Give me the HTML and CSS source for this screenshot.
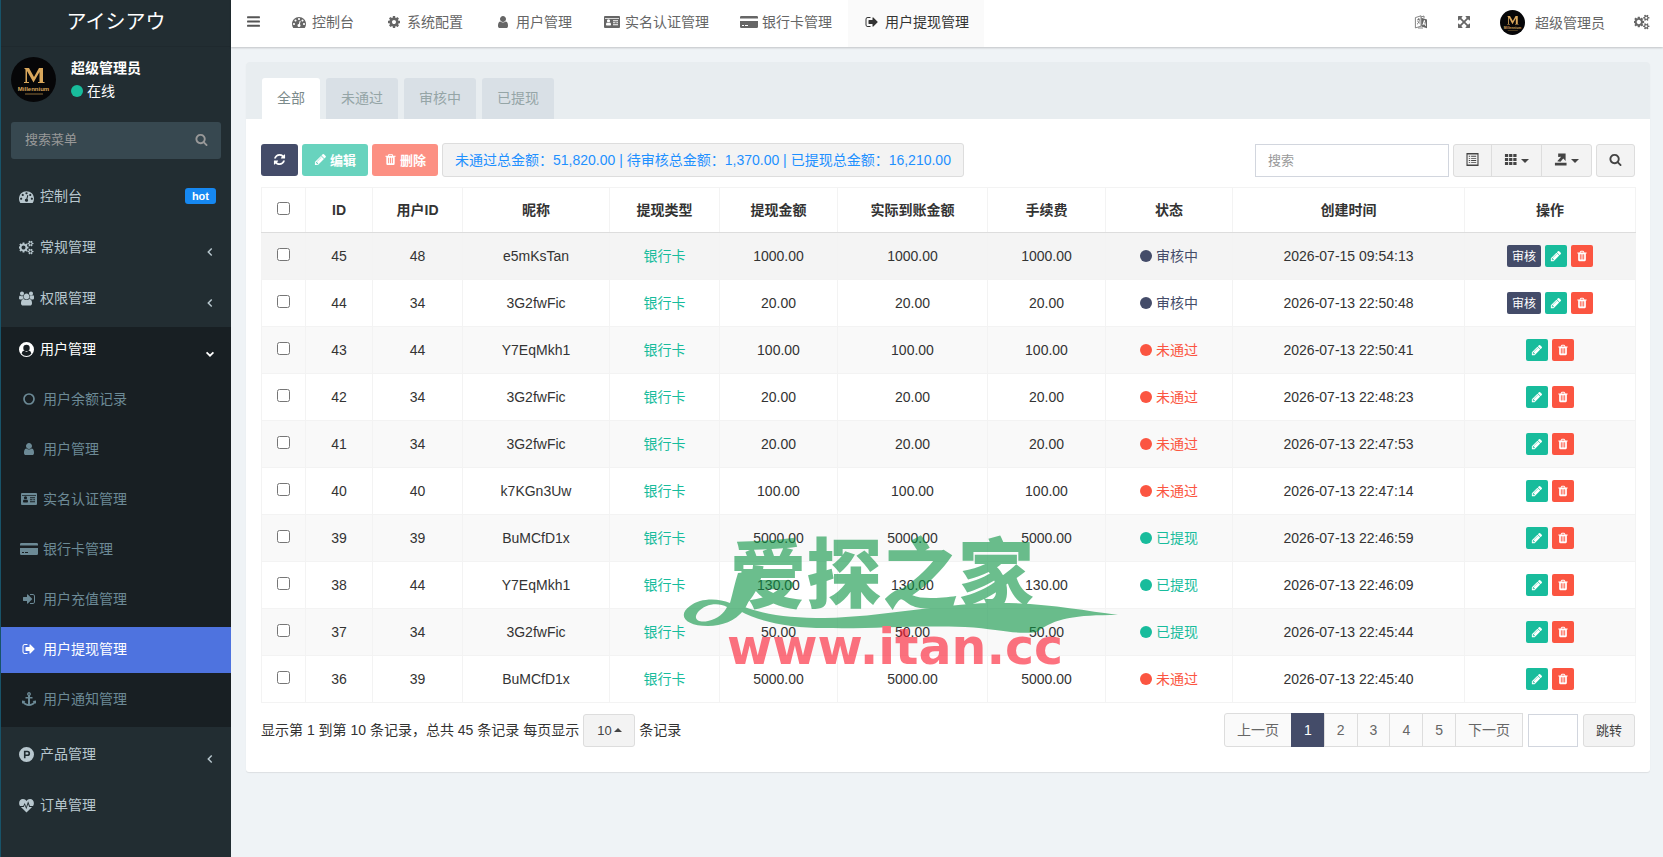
FILE: index.html
```
<!DOCTYPE html>
<html lang="zh-CN">
<head>
    <meta charset="UTF-8">
    <meta name="viewport" content="width=device-width, initial-scale=1.0">
    <title>用户提现管理</title>
    <link rel="stylesheet" href="styles.css">
</head>
<body>

    <!-- Icon set -->
    <svg class="icon-defs" aria-hidden="true">
        <symbol id="i-bars" viewBox="0 0 1792 1792"><path d="M192 256h1408q64 0 64 64v128q0 64-64 64h-1408q-64 0-64-64v-128q0-64 64-64zM192 768h1408q64 0 64 64v128q0 64-64 64h-1408q-64 0-64-64v-128q0-64 64-64zM192 1280h1408q64 0 64 64v128q0 64-64 64h-1408q-64 0-64-64v-128q0-64 64-64z"/></symbol>
        <symbol id="i-dashboard" viewBox="0 0 1792 1792"><path d="M384 1152q0-53-37.500-90.500t-90.500-37.500-90.500 37.500-37.500 90.500 37.500 90.500 90.500 37.500 90.500-37.500 37.500-90.500zm192-448q0-53-37.500-90.500t-90.500-37.500-90.500 37.500-37.500 90.500 37.500 90.500 90.500 37.500 90.500-37.500 37.500-90.500zm428 481l101-382q6-26-7.500-48.500t-38.500-29.500-48 6.500-30 39.500l-101 382q-60 5-107 43.500t-63 98.500q-20 77 20 146t117 89 146-20 89-117q16-60-6-117t-72-91zm660-33q0-53-37.500-90.500t-90.500-37.500-90.500 37.500-37.500 90.500 37.500 90.500 90.500 37.500 90.500-37.500 37.500-90.500zm-640-640q0-53-37.500-90.500t-90.500-37.500-90.500 37.500-37.500 90.500 37.500 90.500 90.500 37.500 90.500-37.500 37.500-90.500zm448 192q0-53-37.500-90.500t-90.500-37.500-90.500 37.500-37.500 90.500 37.500 90.500 90.500 37.500 90.500-37.500 37.500-90.500zm320 448q0 261-141 483-19 29-54 29h-1402q-35 0-54-29-141-221-141-483 0-182 71-348t191-286 286-191 348-71 348 71 286 191 191 286 71 348z"/></symbol>
        <symbol id="i-cog" viewBox="0 0 1792 1792"><path d="M1152 896q0-106-75-181t-181-75-181 75-75 181 75 181 181 75 181-75 75-181zm512-109v222q0 12-8 23t-20 13l-185 28q-19 54-39 91 35 50 107 138 10 12 10 25t-9 23q-27 37-99 108t-94 71q-12 0-26-9l-138-108q-44 23-91 38-16 136-29 186-7 28-36 28h-222q-14 0-24.500-8.500t-11.500-21.500l-28-184q-49-16-90-37l-141 107q-10 9-25 9-14 0-25-11-126-114-165-168-7-10-7-23 0-12 8-23 15-21 51-66.500t54-70.500q-27-50-41-99l-183-27q-13-2-21-12.500t-8-23.500v-222q0-12 8-23t19-13l186-28q14-46 39-92-40-57-107-138-10-12-10-24 0-10 9-23 26-36 98.500-107.500t94.500-71.500q13 0 26 10l138 107q44-23 91-38 16-136 29-186 7-28 36-28h222q14 0 24.500 8.500t11.500 21.500l28 184q49 16 90 37l142-107q9-9 24-9 13 0 25 10 129 119 165 170 7 8 7 22 0 12-8 23-15 21-51 66.500t-54 70.500q26 50 41 98l183 28q13 2 21 12.500t8 23.500z"/></symbol>
        <symbol id="i-cogs" viewBox="0 0 1920 1792"><path d="M832 896q0-106-75-181t-181-75-181 75-75 181 75 181 181 75 181-75 75-181zm768 512q0-52-38-90t-90-38-90 38-38 90q0 53 37.500 90.500t90.500 37.500 90.500-37.500 37.500-90.500zm0-1024q0-52-38-90t-90-38-90 38-38 90q0 53 37.500 90.500t90.500 37.500 90.500-37.500 37.500-90.500zm-384 421v185q0 10-7 19.500t-16 10.500l-155 24q-11 35-32 76 34 48 90 115 7 11 7 20 0 12-7 19-23 30-82.500 89.500t-78.500 59.500q-11 0-21-7l-115-90q-37 19-77 31-11 108-23 155-7 24-30 24h-186q-11 0-20-7.500t-10-17.500l-23-153q-34-10-75-31l-118 89q-7 7-20 7-11 0-21-8-144-133-144-160 0-9 7-19 10-14 41-53t47-61q-23-44-35-82l-152-24q-10-1-17-9.500t-7-19.500v-185q0-10 7-19.500t16-10.500l155-24q11-35 32-76-34-48-90-115-7-11-7-20 0-12 7-20 22-30 82-89t79-59q11 0 21 7l115 90q34-18 77-32 11-108 23-154 7-24 30-24h186q11 0 20 7.500t10 17.500l23 153q34 10 75 31l118-89q8-7 20-7 11 0 21 8 144 133 144 160 0 8-7 19-12 16-42 54t-45 60q23 48 34 82l152 23q10 2 17 10.500t7 19.500zm640 533v140q0 16-149 31-12 27-30 52 51 113 51 138 0 4-4 7-122 71-124 71-8 0-46-47t-52-68q-20 2-30 2t-30-2q-14 21-52 68t-46 47q-2 0-124-71-4-3-4-7 0-25 51-138-18-25-30-52-149-15-149-31v-140q0-16 149-31 13-29 30-52-51-113-51-138 0-4 4-7 4-2 35-20t59-34 30-16q8 0 46 46.500t52 67.500q20-2 30-2t30 2q51-71 92-112l6-2q4 0 124 70 4 3 4 7 0 25-51 138 17 23 30 52 149 15 149 31zm0-1024v140q0 16-149 31-12 27-30 52 51 113 51 138 0 4-4 7-122 71-124 71-8 0-46-47t-52-68q-20 2-30 2t-30-2q-14 21-52 68t-46 47q-2 0-124-71-4-3-4-7 0-25 51-138-18-25-30-52-149-15-149-31v-140q0-16 149-31 13-29 30-52-51-113-51-138 0-4 4-7 4-2 35-20t59-34 30-16q8 0 46 46.500t52 67.500q20-2 30-2t30 2q51-71 92-112l6-2q4 0 124 70 4 3 4 7 0 25-51 138 17 23 30 52 149 15 149 31z"/></symbol>
        <symbol id="i-group" viewBox="0 0 1920 1792"><path d="M593 896q-162 5-265 128h-134q-82 0-138-40.500t-56-118.500q0-353 124-353 6 0 43.500 21t97.500 42.500 119 21.500q67 0 133-23-5 37-5 66 0 159 93 294zm1071 637q0 120-73 189.500t-194 69.500h-874q-121 0-194-69.500t-73-189.500q0-53 3.500-103.500t14-109 26.500-108.500 43-97.500 62-81 85.500-53.500 111.500-20q10 0 43 21.500t73 48 107 48 135 21.500 135-21.500 107-48 73-48 43-21.500q61 0 111.500 20t85.500 53.500 62 81 43 97.500 26.500 108.500 14 109 3.500 103.500zm-1024-1277q0 106-75 181t-181 75-181-75-75-181 75-181 181-75 181 75 75 181zm704 384q0 159-112.500 271.500t-271.500 112.500-271.500-112.500-112.500-271.500 112.500-271.500 271.500-112.500 271.500 112.500 112.500 271.500zm576 225q0 78-56 118.500t-138 40.500h-134q-103-123-265-128 93-135 93-294 0-29-5-66 66 23 133 23 59 0 119-21.500t97.500-42.500 43.500-21q124 0 124 353zm-128-609q0 106-75 181t-181 75-181-75-75-181 75-181 181-75 181 75 75 181z"/></symbol>
        <symbol id="i-user" viewBox="0 0 1792 1792"><path d="M1536 1399q0 109-62.500 187t-150.500 78h-854q-88 0-150.500-78t-62.500-187q0-85 8.500-160.500t31.500-152 58.500-131 94-89 134.500-34.500q131 128 313 128t313-128q76 0 134.500 34.500t94 89 58.500 131 31.500 152 8.500 160.500zm-256-887q0 159-112.500 271.500t-271.500 112.500-271.500-112.500-112.500-271.500 112.500-271.500 271.500-112.500 271.500 112.500 112.500 271.500z"/></symbol>
        <symbol id="i-user-circle" viewBox="0 0 14 14"><path fill-rule="evenodd" d="M7 0a7 7 0 1 1 0 14A7 7 0 0 1 7 0zM2.500 11a6 6 0 0 0 9 0c-.3-1.800-1-2.900-2.300-3a3.200 3.200 0 0 1-4.400 0c-1.300.1-2 1.200-2.300 3zM7 2.500a3 3 0 1 0 0 6 3 3 0 0 0 0-6z"/></symbol>
        <symbol id="i-circle-o" viewBox="0 0 14 14"><circle cx="7" cy="7" r="5" fill="none" stroke="currentColor" stroke-width="1.700"/></symbol>
        <symbol id="i-id-card" viewBox="0 0 16 12"><path fill-rule="evenodd" d="M1 0h14q1 0 1 1v10q0 1-1 1H1q-1 0-1-1V1q0-1 1-1zM1 2v.8h14V2zM2 8.600c0 .5.300.9.800.9h3.400c.5 0 .8-.4.800-.9 0-1.200-.4-2.100-1.200-2.200a1.900 1.900 0 0 1-2.600 0C2.400 6.500 2 7.400 2 8.600zM4.500 3.200a1.600 1.600 0 1 0 0 3.200 1.600 1.600 0 0 0 0-3.200zM9 4.200v1h5v-1zM9 6.200v1h2.500v-1zm3.300 0v1H14v-1zM9 8.200v1h5v-1z"/></symbol>
        <symbol id="i-card" viewBox="0 0 18 12"><path d="M0 5h18v5.700q0 1.300-1.300 1.300H1.300Q0 12 0 10.700zm2 4v1h2V9zm3 0v1h3V9zM16.700 0Q18 0 18 1.300V2.500H0V1.300Q0 0 1.300 0z" fill-rule="evenodd"/></symbol>
        <symbol id="i-sign-in" viewBox="0 0 1792 1792"><path d="M1312 896q0 26-19 45l-544 544q-19 19-45 19t-45-19-19-45v-288h-448q-26 0-45-19t-19-45v-384q0-26 19-45t45-19h448v-288q0-26 19-45t45-19 45 19l544 544q19 19 19 45zm352-352v704q0 119-84.500 203.500t-203.500 84.500h-320q-13 0-22.500-9.500t-9.500-22.500q0-4-1-20t-.5-26.500 3-23.500 10-19.500 20.500-6.500h320q66 0 113-47t47-113v-704q0-66-47-113t-113-47h-312l-11.500-1-11.500-3-8-5.500-7-9-2-13.500q0-4-1-20t-.5-26.500 3-23.500 10-19.500 20.500-6.500h320q119 0 203.500 84.500t84.500 203.500z"/></symbol>
        <symbol id="i-sign-out" viewBox="0 0 1792 1792"><path d="M704 1440q0 4 1 20t.5 26.500-3 23.500-10 19.500-20.500 6.500h-320q-119 0-203.500-84.500t-84.500-203.500v-704q0-119 84.500-203.500t203.500-84.500h320q13 0 22.500 9.500t9.500 22.500q0 4 1 20t.5 26.500-3 23.500-10 19.500-20.500 6.500h-320q-66 0-113 47t-47 113v704q0 66 47 113t113 47h312l11.500 1 11.500 3 8 5.500 7 9 2 13.500zm928-544q0 26-19 45l-544 544q-19 19-45 19t-45-19-19-45v-288h-448q-26 0-45-19t-19-45v-384q0-26 19-45t45-19h448v-288q0-26 19-45t45-19 45 19l544 544q19 19 19 45z"/></symbol>
        <symbol id="i-anchor" viewBox="0 0 14 14"><path fill-rule="evenodd" d="M7 0a2 2 0 0 1 1 3.700V5h2.500v1.600H8v5.300c1.700-.2 3-1 3.500-2l-.9-.9L14 8.500V12l-.9-.9C12 12.800 9.700 14 7 14s-5-1.200-6.100-2.900L0 12V8.500l3.400.5-.9.900c.5 1 1.800 1.800 3.500 2V6.600H3.500V5H6V3.700A2 2 0 0 1 7 0zm0 1.400a.6.6 0 1 0 0 1.300.6.6 0 0 0 0-1.300z"/></symbol>
        <symbol id="i-product" viewBox="0 0 14 14"><path fill-rule="evenodd" d="M7 0a7 7 0 1 1 0 14A7 7 0 0 1 7 0zM4.600 3.500v7h1.500V8.400h1.800a2.450 2.450 0 0 0 0-4.900zM6.100 5h1.700a1 1 0 0 1 0 2H6.100z"/></symbol>
        <symbol id="i-heartbeat" viewBox="0 0 14 14"><path d="M7 13.500L1.800 8.500h2.600l.9-1.900 1.500 4 1.700-5 1 2.900h2.700z"/><path d="M.9 7.500C-.9 4.600.5 1 3.700 1 5.300 1 6.300 1.900 7 2.800 7.700 1.900 8.700 1 10.300 1c3.200 0 4.600 3.600 2.800 6.500h-2.900L8.500 3 6.700 8.400 5.400 4.700 3.900 7.500z"/></symbol>
        <symbol id="i-search" viewBox="0 0 1792 1792"><path d="M1216 832q0-185-131.500-316.500t-316.500-131.500-316.500 131.500-131.500 316.500 131.500 316.500 316.500 131.500 316.500-131.500 131.500-316.500zm512 832q0 52-38 90t-90 38q-54 0-90-38l-343-342q-179 124-399 124-143 0-273.500-55.500t-225-150-150-225-55.500-273.500 55.500-273.500 150-225 225-150 273.500-55.500 273.500 55.500 225 150 150 225 55.500 273.500q0 220-124 399l343 343q37 37 37 90z"/></symbol>
        <symbol id="i-refresh" viewBox="0 0 1792 1792"><path d="M1639 1056q0 5-1 7-64 268-268 434.500t-478 166.500q-146 0-282.500-55t-243.500-157l-129 129q-19 19-45 19t-45-19-19-45v-448q0-26 19-45t45-19h448q26 0 45 19t19 45-19 45l-137 137q71 66 161 102t187 36q134 0 250-65t186-179q11-17 53-117 8-23 30-23h192q13 0 22.500 9.500t9.500 22.500zm25-800v448q0 26-19 45t-45 19h-448q-26 0-45-19t-19-45 19-45l138-138q-148-137-349-137-134 0-250 65t-186 179q-11 17-53 117-8 23-30 23h-199q-13 0-22.500-9.500t-9.500-22.500v-7q65-268 270-434.500t480-166.500q146 0 284 55.500t245 156.500l130-129q19-19 45-19t45 19 19 45z"/></symbol>
        <symbol id="i-pencil" viewBox="0 0 1792 1792"><path d="M491 1536l91-91-235-235-91 91v107h128v128h107zm523-928q0-22-22-22-10 0-17 7l-542 542q-7 7-7 17 0 22 22 22 10 0 17-7l542-542q7-7 7-17zm-54-192l416 416-832 832h-416v-416zm683 96q0 53-37 90l-166 166-416-416 166-165q36-38 90-38 53 0 91 38l235 234q37 39 37 91z"/></symbol>
        <symbol id="i-trash" viewBox="0 0 1792 1792"><path d="M704 1376v-704q0-14-9-23t-23-9h-64q-14 0-23 9t-9 23v704q0 14 9 23t23 9h64q14 0 23-9t9-23zm256 0v-704q0-14-9-23t-23-9h-64q-14 0-23 9t-9 23v704q0 14 9 23t23 9h64q14 0 23-9t9-23zm256 0v-704q0-14-9-23t-23-9h-64q-14 0-23 9t-9 23v704q0 14 9 23t23 9h64q14 0 23-9t9-23zm-544-992h448l-48-117q-7-9-17-11h-317q-10 2-17 11zm928 32v64q0 14-9 23t-23 9h-96v948q0 83-47 143.500t-113 60.500h-832q-66 0-113-58.500t-47-141.500v-952h-96q-14 0-23-9t-9-23v-64q0-14 9-23t23-9h309l70-167q15-37 54-63t79-26h320q40 0 79 26t54 63l70 167h309q14 0 23 9t9 23z"/></symbol>
        <symbol id="i-expand" viewBox="0 0 1792 1792"><path d="M1411 541l-355 355 355 355 144-144q29-31 70-14 39 17 39 59v448q0 26-19 45t-45 19h-448q-42 0-59-40-17-39 14-69l144-144-355-355-355 355 144 144q31 30 14 69-17 40-59 40h-448q-26 0-45-19t-19-45v-448q0-42 40-59 39-17 69 14l144 144 355-355-355-355-144 144q-19 19-45 19-12 0-24-5-40-17-40-59v-448q0-26 19-45t45-19h448q42 0 59 40 17 39-14 69l-144 144 355 355 355-355-144-144q-31-30-14-69 17-40 59-40h448q26 0 45 19t19 45v448q0 42-39 59-13 5-25 5-26 0-45-19z"/></symbol>
        <symbol id="i-language" viewBox="0 0 14 14"><path fill="none" stroke="currentColor" stroke-width=".8" d="M1.400 2.600L7 .8v10.400l-5.600 1.700zM7 2l3-1v2M3 5l3-1M4.500 3.200v1.600M3 9.300c1.400-1 2.300-2.600 2.400-4.700M3.400 6.300l2.400 2M4 13h5"/><path fill-rule="evenodd" d="M7.300 2.700l5.700 1.700v8.800l-5.700-1.800zM10 5l-1.600 5 .9.300.3-1 1.300.4.300 1.100.9.300L10.800 5.300zm.4 1.500l.5 2-.9-.3z"/></symbol>
        <symbol id="i-angle-left" viewBox="0 0 14 14"><path fill="none" stroke="currentColor" stroke-width="1.700" d="M9 3L5 7l4 4"/></symbol>
        <symbol id="i-angle-down" viewBox="0 0 14 14"><path fill="none" stroke="currentColor" stroke-width="2" d="M3 5l4 4 4-4"/></symbol>
        <symbol id="i-list-alt" viewBox="0 0 14 14"><path fill-rule="evenodd" d="M.5 0h13v14H.5zM1.700 1.500v11h10.600v-11zM3 3h1.500v1H3zm2.500 0H11v1H5.500zM3 5.300h1.500v1H3zm2.500 0H11v1H5.500zM3 7.600h1.500v1H3zm2.500 0H11v1H5.500zM3 9.900h1.500v1H3zm2.500 0H11v1H5.500z"/></symbol>
        <symbol id="i-th" viewBox="0 0 14 14"><path d="M1 1h3.500v3.300H1zm4.500 0H9v3.300H5.500zM10 1h3.500v3.300H10zM1 5.300h3.500v3.400H1zm4.500 0H9v3.400H5.500zm4.500 0h3.500v3.400H10zM1 9.700h3.500V13H1zm4.500 0H9V13H5.500zm4.500 0h3.500V13H10z"/></symbol>
        <symbol id="i-export" viewBox="0 0 14 14"><path d="M1 10.500h12.500v3H1zM4.500.5h8v8L10 6 7 9.300 3.500 9l4.200-5-3.200.2z"/></symbol>
        <symbol id="i-logo" viewBox="0 0 45 45">
            <circle cx="22.500" cy="22.500" r="22.500" fill="#060608"/>
            <path fill="#d9a75c" d="M13 11h5l5 9 5-9h4v14h1.500v1H27v-1h1.500V15l-6 10.500L16 14v11h2v1h-5v-1h1.500V12.500z"/>
            <text x="22.500" y="34" text-anchor="middle" class="logo-name">Millennium</text>
            <path stroke="#8a6a38" d="M14 37h18"/>
        </symbol>
    </svg>

    <div class="wrapper">
        <aside class="sidebar">
            <a href="#" class="logo">アイシアウ</a>
            <div class="user-panel">
                <svg class="avatar"><use href="#i-logo"/></svg>
                <div class="user-info">
                    <strong>超级管理员</strong>
                    <a href="#"><span class="dot"></span>在线</a>
                </div>
            </div>
            <form class="menu-search">
                <input type="text" placeholder="搜索菜单" aria-label="搜索菜单">
                <button type="button" aria-label="搜索"><svg class="icon"><use href="#i-search"/></svg></button>
            </form>
            <ul class="menu">
                <li><a href="#"><svg class="icon"><use href="#i-dashboard"/></svg>控制台<span class="label-hot">hot</span></a></li>
                <li><a href="#"><svg class="icon"><use href="#i-cogs"/></svg>常规管理<svg class="icon arrow"><use href="#i-angle-left"/></svg></a></li>
                <li><a href="#"><svg class="icon"><use href="#i-group"/></svg>权限管理<svg class="icon arrow"><use href="#i-angle-left"/></svg></a></li>
                <li class="open">
                    <a href="#"><svg class="icon"><use href="#i-user-circle"/></svg>用户管理<svg class="icon arrow"><use href="#i-angle-down"/></svg></a>
                    <ul class="submenu">
                        <li><a href="#"><svg class="icon"><use href="#i-circle-o"/></svg>用户余额记录</a></li>
                        <li><a href="#"><svg class="icon"><use href="#i-user"/></svg>用户管理</a></li>
                        <li><a href="#"><svg class="icon icon-wide"><use href="#i-id-card"/></svg>实名认证管理</a></li>
                        <li><a href="#"><svg class="icon icon-wide"><use href="#i-card"/></svg>银行卡管理</a></li>
                        <li><a href="#"><svg class="icon"><use href="#i-sign-in"/></svg>用户充值管理</a></li>
                        <li class="active"><a href="#"><svg class="icon"><use href="#i-sign-out"/></svg>用户提现管理</a></li>
                        <li><a href="#"><svg class="icon"><use href="#i-anchor"/></svg>用户通知管理</a></li>
                    </ul>
                </li>
                <li><a href="#"><svg class="icon"><use href="#i-product"/></svg>产品管理<svg class="icon arrow"><use href="#i-angle-left"/></svg></a></li>
                <li><a href="#"><svg class="icon"><use href="#i-heartbeat"/></svg>订单管理</a></li>
            </ul>
        </aside>

        <div class="main">
            <header class="navbar">
                <button type="button" class="toggle" aria-label="菜单"><svg class="icon"><use href="#i-bars"/></svg></button>
                <nav class="nav-tabs">
                    <a href="#"><svg class="icon"><use href="#i-dashboard"/></svg>控制台</a>
                    <a href="#"><svg class="icon"><use href="#i-cog"/></svg>系统配置</a>
                    <a href="#"><svg class="icon"><use href="#i-user"/></svg>用户管理</a>
                    <a href="#"><svg class="icon icon-wide"><use href="#i-id-card"/></svg>实名认证管理</a>
                    <a href="#"><svg class="icon icon-wide"><use href="#i-card"/></svg>银行卡管理</a>
                    <a href="#" class="active"><svg class="icon"><use href="#i-sign-out"/></svg>用户提现管理</a>
                </nav>
                <div class="nav-right">
                    <a href="#" aria-label="语言"><svg class="icon"><use href="#i-language"/></svg></a>
                    <a href="#" aria-label="全屏"><svg class="icon"><use href="#i-expand"/></svg></a>
                    <a href="#" class="nav-user"><svg class="avatar-small"><use href="#i-logo"/></svg>超级管理员</a>
                    <a href="#" aria-label="设置"><svg class="icon icon-cogs"><use href="#i-cogs"/></svg></a>
                </div>
            </header>

            <div class="content">
                <div class="panel">
                    <div class="panel-heading">
                        <a href="#" class="active">全部</a>
                        <a href="#">未通过</a>
                        <a href="#">审核中</a>
                        <a href="#">已提现</a>
                    </div>
                    <div class="panel-body">
                        <div class="toolbar">
                            <button type="button" class="btn btn-primary" aria-label="刷新"><svg class="icon"><use href="#i-refresh"/></svg></button>
                            <button type="button" class="btn btn-success" disabled><svg class="icon"><use href="#i-pencil"/></svg>编辑</button>
                            <button type="button" class="btn btn-danger" disabled><svg class="icon"><use href="#i-trash"/></svg>删除</button>
                            <span class="totals">未通过总金额：51,820.00 | 待审核总金额：1,370.00 | 已提现总金额：16,210.00</span>
                            <input type="text" class="form-control table-search" placeholder="搜索" aria-label="搜索">
                            <div class="btn-group">
                                <button type="button" class="btn btn-default" aria-label="切换"><svg class="icon"><use href="#i-list-alt"/></svg></button>
                                <button type="button" class="btn btn-default" aria-label="列"><svg class="icon"><use href="#i-th"/></svg><span class="caret"></span></button>
                                <button type="button" class="btn btn-default" aria-label="导出数据"><svg class="icon"><use href="#i-export"/></svg><span class="caret"></span></button>
                            </div>
                            <button type="button" class="btn btn-default" aria-label="普通搜索"><svg class="icon"><use href="#i-search"/></svg></button>
                        </div>

                        <table class="table">
                            <colgroup>
                                <col class="c-check"><col class="c-id"><col class="c-uid"><col class="c-nick"><col class="c-type"><col class="c-money"><col class="c-real"><col class="c-money"><col class="c-status"><col class="c-time"><col class="c-ops">
                            </colgroup>
                            <thead>
                                <tr>
                                    <th><input type="checkbox" aria-label="全选"></th>
                                    <th>ID</th>
                                    <th>用户ID</th>
                                    <th>昵称</th>
                                    <th>提现类型</th>
                                    <th>提现金额</th>
                                    <th>实际到账金额</th>
                                    <th>手续费</th>
                                    <th>状态</th>
                                    <th>创建时间</th>
                                    <th>操作</th>
                                </tr>
                            </thead>
                            <tbody id="rows"></tbody>
                        </table>

                        <div class="table-footer">
                            <div class="page-info">
                                <span>显示第 1 到第 10 条记录，总共 45 条记录</span>
                                <label for="pageSize">每页显示</label>
                                <select id="pageSize">
                                    <option>10</option>
                                    <option>25</option>
                                    <option>50</option>
                                </select>
                                <span>条记录</span>
                            </div>
                            <div class="page-nav">
                                <div class="pagination">
                                    <a href="#">上一页</a>
                                    <a href="#" class="active">1</a>
                                    <a href="#">2</a>
                                    <a href="#">3</a>
                                    <a href="#">4</a>
                                    <a href="#">5</a>
                                    <a href="#">下一页</a>
                                </div>
                                <input type="text" class="form-control page-input" aria-label="页码">
                                <button type="button" class="btn btn-default">跳转</button>
                            </div>
                        </div>
                    </div>

                    <div class="watermark">
                        <svg viewBox="0 0 480 150">
                            <path class="wm-green" fill-rule="evenodd" d="M78 43L97 41C93 60 90 71 84 80C75 91 62 96 48 96C25 96 17 85 30 76C40 68 58 68 70 73C73 62 75 52 78 43ZM67 77C58 72 45 74 38 82C32 90 40 93 48 91C58 89 64 83 67 77Z"/>
                            <path class="wm-green" d="M82 76C105 85 130 88 165 88C220 87 280 74 330 73C380 72 420 80 458 85C415 85 395 88 377 102C355 105 340 99 305 97C250 95 215 99 165 98C130 98 100 92 80 81Z"/>
                            <text class="wm-green wm-title" x="70" y="72">爱探之家</text>
                            <text class="wm-red wm-url" x="67" y="134">www.itan.cc</text>
                        </svg>
                    </div>
                </div>
            </div>
        </div>
    </div>

    <script>
        // id, user id, nickname, amount, status, created
        const records = [
            [45, 48, "e5mKsTan", "1000.00", "pending", "2026-07-15 09:54:13"],
            [44, 34, "3G2fwFic", "20.00", "pending", "2026-07-13 22:50:48"],
            [43, 44, "Y7EqMkh1", "100.00", "rejected", "2026-07-13 22:50:41"],
            [42, 34, "3G2fwFic", "20.00", "rejected", "2026-07-13 22:48:23"],
            [41, 34, "3G2fwFic", "20.00", "rejected", "2026-07-13 22:47:53"],
            [40, 40, "k7KGn3Uw", "100.00", "rejected", "2026-07-13 22:47:14"],
            [39, 39, "BuMCfD1x", "5000.00", "paid", "2026-07-13 22:46:59"],
            [38, 44, "Y7EqMkh1", "130.00", "paid", "2026-07-13 22:46:09"],
            [37, 34, "3G2fwFic", "50.00", "paid", "2026-07-13 22:45:44"],
            [36, 39, "BuMCfD1x", "5000.00", "rejected", "2026-07-13 22:45:40"]
        ];
        const statusText = { pending: "审核中", rejected: "未通过", paid: "已提现" };

        function renderRow([id, uid, nick, money, status, time]) {
            const audit = status === "pending" ? '<button type="button" class="btn-xs btn-primary">审核</button>' : "";
            return `<tr>
                <td><input type="checkbox" aria-label="选择 ${id}"></td>
                <td>${id}</td>
                <td>${uid}</td>
                <td>${nick}</td>
                <td><a href="#" class="type-link">银行卡</a></td>
                <td>${money}</td>
                <td>${money}</td>
                <td>${money}</td>
                <td><span class="status ${status}"><span class="dot"></span>${statusText[status]}</span></td>
                <td>${time}</td>
                <td><div class="ops">${audit}
                    <button type="button" class="btn-xs btn-success" aria-label="编辑"><svg class="icon"><use href="#i-pencil"/></svg></button>
                    <button type="button" class="btn-xs btn-danger" aria-label="删除"><svg class="icon"><use href="#i-trash"/></svg></button>
                </div></td>
            </tr>`;
        }

        document.getElementById("rows").innerHTML = records.map(renderRow).join("");
    </script>

</body>
</html>
```
FILE: styles.css
```
* {
    box-sizing: border-box;
}
body {
    margin: 0;
    font-family: "Liberation Sans", "Noto Sans CJK SC", sans-serif;
    font-size: 14px;
    line-height: 20px;
    color: #333;
    background-color: #eff3f6;
}
a {
    color: inherit;
    text-decoration: none;
}
ul {
    list-style: none;
    margin: 0;
    padding: 0;
}
button, input, select {
    font-family: inherit;
}
.icon-defs {
    position: absolute;
    width: 0;
    height: 0;
}
.icon {
    width: 14px;
    height: 14px;
    fill: currentColor;
    flex: none;
}
.wrapper {
    display: flex;
    min-height: 100vh;
}

/* Sidebar */
.sidebar {
    width: 231px;
    flex: none;
    background-color: #222d32;
    border-left: 1px solid #185369;
    color: #b8c7ce;
}
.logo {
    display: block;
    height: 47px;
    line-height: 44px;
    text-align: center;
    font-family: "Liberation Sans", "Noto Sans CJK JP", sans-serif;
    font-size: 20px;
    color: #fff;
    border-bottom: 1px solid #1f292e;
}
.user-panel {
    display: flex;
    align-items: center;
    gap: 15px;
    padding: 10px;
    color: #fff;
}
.avatar {
    width: 45px;
    height: 45px;
}
.avatar-small {
    width: 25px;
    height: 25px;
}
.logo-name {
    font-size: 6px;
    font-weight: bold;
    fill: #d9a75c;
}
.user-info {
    display: flex;
    flex-direction: column;
    gap: 3px;
}
.dot {
    display: inline-block;
    width: 12px;
    height: 12px;
    margin-right: 4px;
    border-radius: 50%;
    background-color: #18bc9c;
    vertical-align: -1px;
}
.menu-search {
    display: flex;
    margin: 10px 10px 15px;
    height: 37px;
    background-color: #374850;
    border-radius: 3px;
}
.menu-search input {
    flex: 1;
    min-width: 0;
    padding: 0 14px 2px;
    border: 0;
    background: none;
    font-size: 13px;
    color: #fff;
}
.menu-search input::placeholder,
.form-control::placeholder {
    color: #999;
}
.menu-search button {
    width: 40px;
    padding: 0;
    border: 0;
    background: none;
    color: #999;
}
.menu-search .icon {
    width: 13px;
    height: 13px;
}
.menu > li {
    margin-bottom: 5px;
}
.menu a {
    display: flex;
    align-items: center;
    gap: 6px;
    height: 46px;
    padding: 0 15px 2px 18px;
}
.menu > li > a > .icon {
    width: 15px;
    height: 15px;
}
.menu > li > a > .arrow {
    width: 12px;
    height: 12px;
    margin-left: auto;
    margin-top: 10px;
}
.label-hot {
    margin-left: auto;
    padding: 0 7px;
    line-height: 16px;
    font-size: 11px;
    font-weight: bold;
    color: #fff;
    background-color: #1688f1;
    border-radius: 3px;
}
.menu .open {
    background-color: #181f23;
}
.menu .open > a {
    color: #fff;
}
.submenu {
    padding-bottom: 4px;
    color: #6c8a96;
}
.submenu li {
    padding-top: 4px;
}
.submenu .active a {
    background-color: #4e73df;
    color: #fff;
}
.submenu a {
    gap: 5px;
    padding-left: 19px;
}
.submenu .icon,
.nav-tabs .icon {
    width: 18px;
}

/* Top bar */
.main {
    flex: 1;
    min-width: 0;
}
.navbar {
    display: flex;
    height: 47px;
    background-color: #fff;
    box-shadow: 0 1px 2px rgba(0, 0, 0, 0.2);
    color: #666;
}
.toggle {
    padding: 0 14px 4px 15px;
    border: 0;
    background: none;
    color: #555;
}
.toggle .icon {
    width: 15px;
    height: 15px;
    vertical-align: middle;
}
.nav-tabs {
    display: flex;
    gap: 1px;
}
.nav-tabs a {
    display: flex;
    align-items: center;
    gap: 4px;
    padding: 0 15px 4px;
    white-space: nowrap;
}
.nav-tabs .active {
    background-color: #fafafa;
    color: #333;
}
.nav-tabs .icon-wide,
.submenu .icon-wide {
    height: 12px;
}
.nav-right {
    display: flex;
    gap: 29px;
    margin-left: auto;
    padding-right: 13px;
}
.nav-right a {
    display: flex;
    align-items: center;
    padding-bottom: 4px;
}
.nav-right .icon-cogs {
    width: 16px;
    height: 16px;
}
.nav-right .nav-user {
    gap: 10px;
    padding-bottom: 2px;
}

/* Panel */
.content {
    padding: 15px 13px 15px 15px;
}
.panel {
    position: relative;
    background-color: #fff;
    border-radius: 3px;
    box-shadow: 0 1px 1px rgba(0, 0, 0, 0.08);
}
.panel-heading {
    display: flex;
    gap: 6px;
    padding: 16px 16px 0;
    background-color: #e8edf0;
    border-radius: 3px 3px 0 0;
}
.panel-heading a {
    padding: 10px 15px 11px;
    background-color: #d9e0e6;
    color: #95a5a6;
    border-radius: 3px 3px 0 0;
}
.panel-heading .active {
    background-color: #fff;
    color: #7b8a8b;
}
.panel-body {
    padding: 24px 15px 25px;
}
.toolbar {
    display: flex;
    align-items: center;
    gap: 4px;
    margin-bottom: 10px;
}
.btn {
    display: inline-flex;
    align-items: center;
    justify-content: center;
    gap: 3px;
    height: 32px;
    padding: 0 12px 2px;
    border: 0;
    border-radius: 3px;
    font-size: 13px;
    color: #fff;
}
.toolbar .btn-success,
.toolbar .btn-danger {
    font-weight: bold;
}
.btn:disabled {
    opacity: 0.65;
}
.btn .icon {
    width: 13px;
    height: 13px;
}
.btn-primary {
    background-color: #444c69;
}
.btn-success {
    background-color: #18bc9c;
}
.btn-danger {
    background-color: #fb5541;
}
.btn-default {
    height: 33px;
    background-color: #f3f3f3;
    border: 1px solid #ddd;
    color: #444;
}
.totals {
    padding: 6px 12px;
    background-color: #f3f3f3;
    border: 1px solid #ddd;
    border-radius: 3px;
    color: #1e90ff;
    white-space: nowrap;
}
.form-control {
    height: 33px;
    padding: 0 12px;
    border: 1px solid #d2d6de;
    font-size: 13px;
    color: #555;
}
.table-search {
    width: 194px;
    margin-left: auto;
}
.btn-group {
    display: flex;
}
.btn-group .btn {
    border-radius: 0;
    margin-left: -1px;
}
.btn-group .btn:first-child {
    margin-left: 0;
    border-radius: 3px 0 0 3px;
}
.btn-group .btn:last-child {
    border-radius: 0 3px 3px 0;
}
.caret {
    border-top: 4px solid;
    border-left: 4px solid transparent;
    border-right: 4px solid transparent;
    margin: 4px 0 0 1px;
}

/* Table */
.table {
    width: 100%;
    table-layout: fixed;
    border-collapse: collapse;
    text-align: center;
}
.table th,
.table td {
    height: 47px;
    padding: 0;
    border: 1px solid #f3f3f3;
}
.table th {
    height: 45px;
    border-bottom-color: #ddd;
}
.table input {
    display: block;
    width: 13px;
    height: 13px;
    margin: 0 auto 3px;
}
.table tbody tr:nth-child(odd) {
    background-color: #f9f9f9;
}
.table tbody tr:first-child {
    background-color: #f4f4f4;
}
.c-check { width: 44px; }
.c-id { width: 67px; }
.c-uid { width: 90px; }
.c-nick { width: 147px; }
.c-type { width: 110px; }
.c-money { width: 118px; }
.c-real { width: 150px; }
.c-status { width: 127px; }
.c-time { width: 232px; }
.c-ops { width: 171px; }
.type-link,
.paid {
    color: #18bc9c;
}
.pending {
    color: #444c69;
}
.rejected {
    color: #fb5541;
}
.status .dot {
    background-color: currentColor;
}
.ops {
    display: flex;
    justify-content: center;
    gap: 4px;
}
.btn-xs {
    display: flex;
    align-items: center;
    height: 22px;
    padding: 0 5px 1px;
    border: 0;
    border-radius: 2px;
    font-size: 12px;
    color: #fff;
}
.btn-xs .icon {
    width: 12px;
    height: 12px;
}

/* Table footer */
.table-footer {
    display: flex;
    justify-content: space-between;
    align-items: center;
    margin-top: 10px;
}
.page-info {
    display: flex;
    align-items: center;
    gap: 4px;
}
#pageSize {
    appearance: none;
    width: 52px;
    height: 33px;
    padding: 0 13px;
    border: 1px solid #ddd;
    border-radius: 3px;
    font-size: 13px;
    color: #444;
    background: #f3f3f3 url("data:image/svg+xml,%3Csvg xmlns='http://www.w3.org/2000/svg' width='8' height='4'%3E%3Cpath d='M0 4l4-4 4 4z' fill='%23444'/%3E%3C/svg%3E") no-repeat right 12px center;
}
.page-nav {
    display: flex;
    align-items: center;
    gap: 5px;
}
.pagination {
    display: flex;
}
.pagination a {
    padding: 6px 12px;
    margin-left: -1px;
    background-color: #fafafa;
    border: 1px solid #ddd;
    color: #666;
}
.pagination a:first-child {
    border-radius: 3px 0 0 3px;
}
.pagination .active {
    background-color: #444c69;
    border-color: #444c69;
    color: #fff;
}
.page-input {
    width: 50px;
}

/* Site mark over the table */
.watermark {
    position: absolute;
    left: 414px;
    top: 468px;
    width: 480px;
    opacity: 0.6;
    pointer-events: none;
}
.watermark svg {
    display: block;
    width: 100%;
    overflow: visible;
}
.wm-green {
    fill: #0a9443;
}
.wm-red {
    fill: #fc162b;
}
.wm-title {
    font-family: "Noto Sans CJK SC", sans-serif;
    font-size: 76px;
    font-weight: 900;
}
.wm-url {
    font-family: "DejaVu Sans", sans-serif;
    font-size: 49px;
    font-weight: bold;
}
```
